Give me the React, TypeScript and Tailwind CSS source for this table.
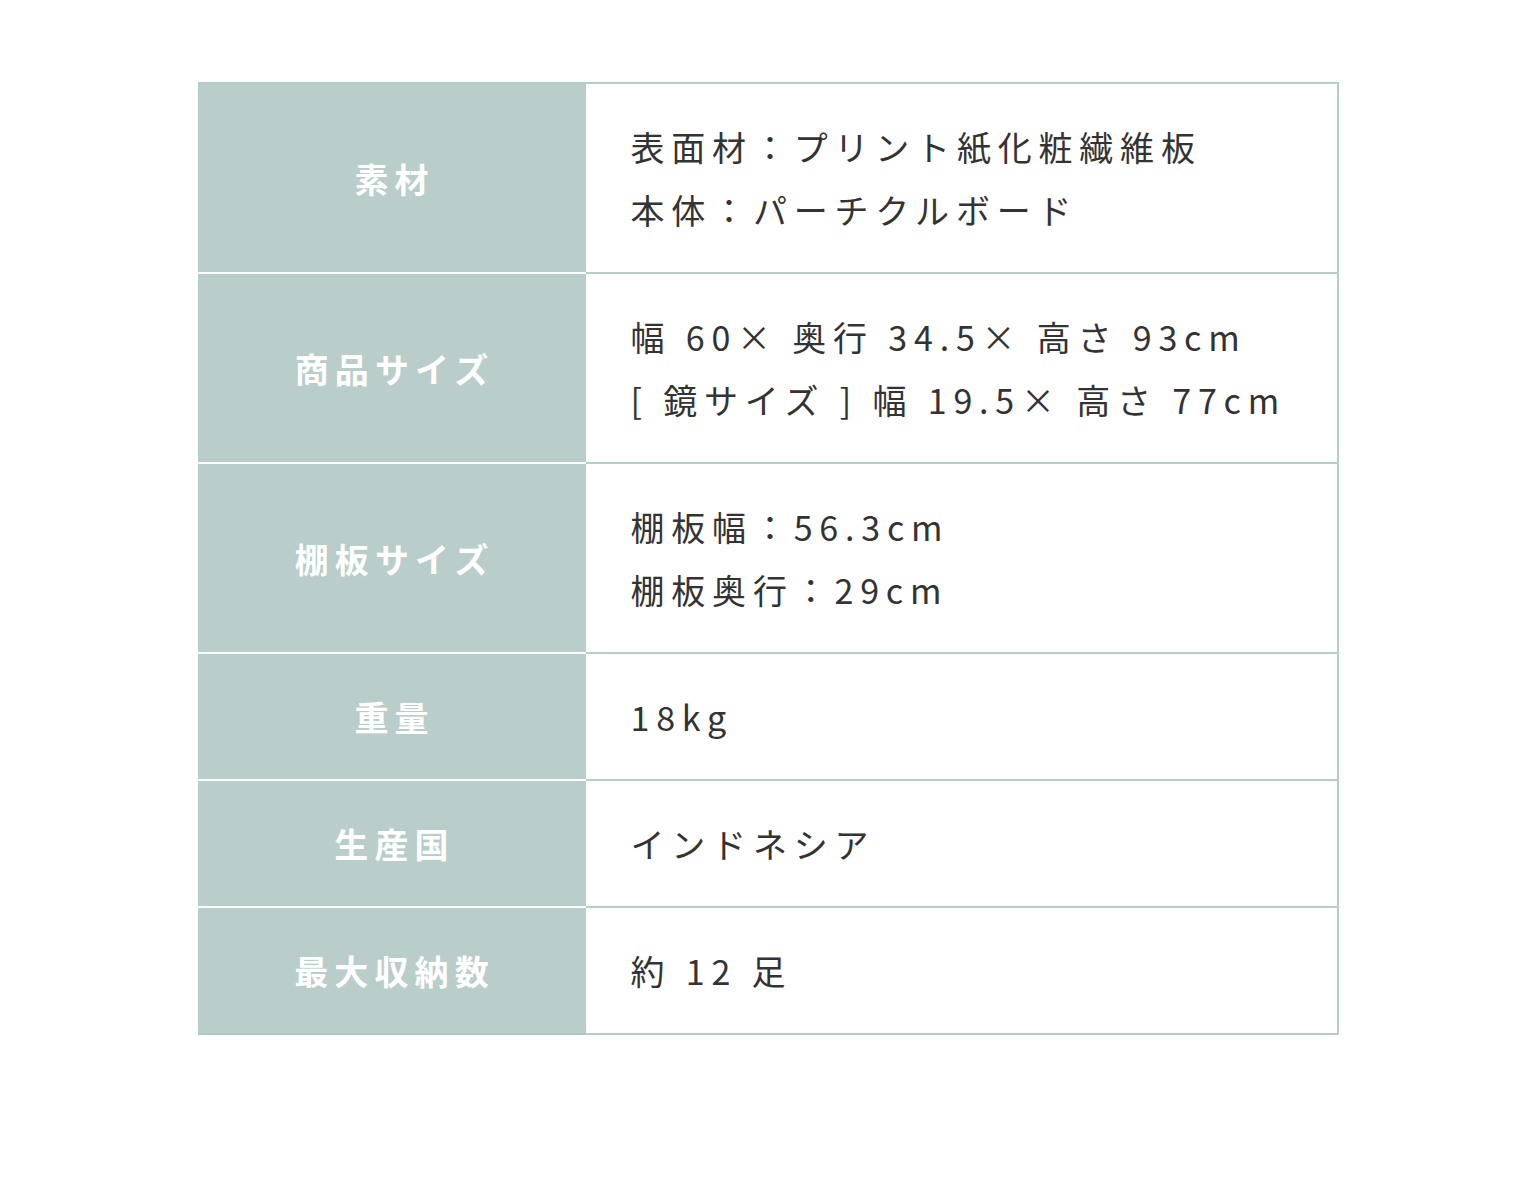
import React from "react";

type Spec = { label: string; lines: string[] };

const specs: Spec[] = [
  { label: "素材", lines: ["表面材：プリント紙化粧繊維板", "本体：パーチクルボード"] },
  { label: "商品サイズ", lines: ["幅 60× 奥行 34.5× 高さ 93cm", "[ 鏡サイズ ] 幅 19.5× 高さ 77cm"] },
  { label: "棚板サイズ", lines: ["棚板幅：56.3cm", "棚板奥行：29cm"] },
  { label: "重量", lines: ["18kg"] },
  { label: "生産国", lines: ["インドネシア"] },
  { label: "最大収納数", lines: ["約 12 足"] },
];

export default function App() {
  return (
    <div
      className="min-h-[1196px] bg-white pt-[82px]"
      style={{ fontFamily: '"Noto Sans CJK JP", "Noto Sans", sans-serif' }}
    >
      <div className="mx-auto w-[1141px] border-t-2 border-r-2 border-[#b7cdc8]">
        {specs.map((s, i) => {
          const last = i === specs.length - 1;
          return (
            <div key={i} className="grid grid-cols-[388px_1fr]">
              <div
                className={`flex items-center justify-center bg-[#b9cdca] text-[34px] font-bold tracking-[0.18em] text-white ${
                  last ? "border-b-2 border-[#aec6c1]" : "border-b-2 border-white"
                }`}
              >
                <span className="pl-[0.18em]">{s.label}</span>
              </div>
              <div className="border-b-2 border-[#b7cdc8] py-[31px] pl-[45px] text-[34px] leading-[63px] tracking-[0.2em] text-[#333333]">
                {s.lines.map((l, j) => (
                  <div key={j} className="whitespace-nowrap">
                    {l}
                  </div>
                ))}
              </div>
            </div>
          );
        })}
      </div>
    </div>
  );
}
